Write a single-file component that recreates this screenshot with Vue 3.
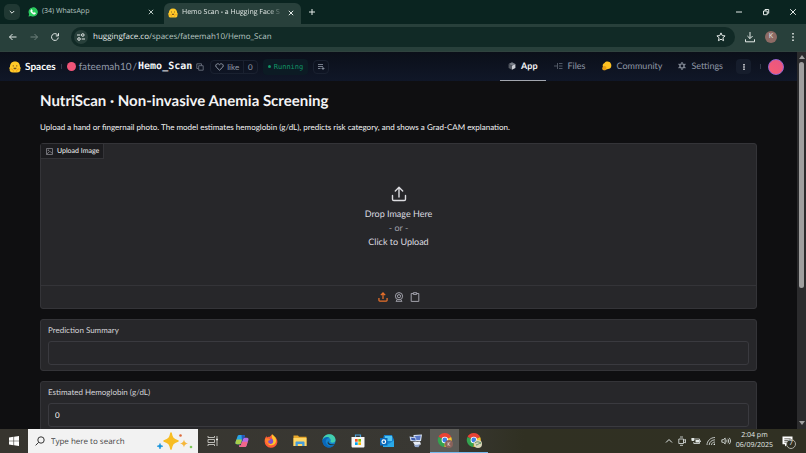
<script setup>
import { ref } from 'vue'

const search = ref('')
const summary = ref('')
const hemoglobin = ref('0')
</script>

<template>
  <div class="window">
    <header class="tabstrip">
      <button class="tab-search" aria-label="Search tabs">
        <svg width="8" height="8" viewBox="0 0 8 8"><path d="M1.8 3 4 5.2 6.2 3" class="line" /></svg>
      </button>
      <div class="tab">
        <svg width="10" height="10" viewBox="0 0 20 20">
          <path d="M1 19.2 2.3 14.300A9.200 9.200 0 1 1 5.900 17.900Z" fill="#35cf68" />
          <path d="M2.600 17.600 3.700 13.900A7.900 7.900 0 1 1 6.300 16.600Z" fill="#25c95a" />
          <path d="M6.800 5.400c.9-.5 1.300 0 1.900 1.700.2.700-.8 1.300-.7 1.600.8 1.600 2 2.600 3.500 3.200.5.100 1-1.200 1.500-1.100l2 1c.3.300 0 1.600-.8 2.100-2 1.400-5.300-.2-7.300-2.500C5 9.200 4.800 6.700 6.800 5.400Z" fill="#fff" stroke="#fff" />
        </svg>
        <span class="tab-title">(34) WhatsApp</span>
        <button aria-label="Close WhatsApp tab"><svg width="8" height="8" viewBox="0 0 8 8"><path d="m1.800 1.800 4.400 4.400m0-4.400L1.800 6.200" class="line" /></svg></button>
      </div>
      <div class="tab active">
        <svg width="10" height="10" viewBox="0 0 24 24">
          <path d="M12 1C5.500 1 2 5.500 2 11.500c-2 2-1.500 4-.5 5C.5 20 3 23 8 23h8c5 0 7.500-3 6.500-6.500 1-1 1.500-3-.5-5C22 5.500 18.500 1 12 1Z" fill="#ffc928" />
          <path d="M7.500 8.500h2v2.500h-2zm7 0h2V11h-2zM9 13.500h6c0 2-1 3-3 3s-3-1-3-3Z" fill="#7a5520" />
          <path d="M3 16c3-1 6 2 6 5M21 16c-3-1-6 2-6 5" fill="none" stroke="#f19b19" stroke-width="2" />
        </svg>
        <span class="tab-title fade">Hemo Scan - a Hugging Face S</span>
        <button aria-label="Close Hemo Scan tab"><svg width="8" height="8" viewBox="0 0 8 8"><path d="m1.800 1.800 4.400 4.400m0-4.400L1.800 6.200" class="line" /></svg></button>
      </div>
      <button class="new-tab" aria-label="New tab"><svg width="8" height="8" viewBox="0 0 8 8"><path d="M4 1v6M1 4h6" class="line" /></svg></button>
      <div class="window-controls">
        <button aria-label="Minimize"><svg width="8" height="8" viewBox="0 0 8 8"><path d="M1 4h6" class="line" /></svg></button>
        <button aria-label="Restore"><svg width="8" height="8" viewBox="0 0 8 8"><path d="M1.500 3h3.700v3.700H1.500zM3 3V1.500h3.700v3.700H5.200" class="line" /></svg></button>
        <button aria-label="Close"><svg width="8" height="8" viewBox="0 0 8 8"><path d="m1.200 1.200 5.600 5.600m0-5.600L1.200 6.800" class="line" /></svg></button>
      </div>
    </header>

    <nav class="toolbar" aria-label="Browser">
      <button aria-label="Back"><svg width="10" height="10" viewBox="0 0 10 10"><path d="M8.500 5h-7m3-3-3 3 3 3" class="line" /></svg></button>
      <button class="muted" aria-label="Forward"><svg width="10" height="10" viewBox="0 0 10 10"><path d="M1.500 5h7m-3-3 3 3-3 3" class="line" /></svg></button>
      <button aria-label="Reload"><svg width="10" height="10" viewBox="0 0 10 10"><path d="M8.300 5.500A3.400 3.400 0 1 1 7.400 2.700L8.500 3.900M8.500 1.200v2.700H5.800" class="line" /></svg></button>
      <div class="omnibox">
        <button class="site-info" aria-label="Site information"><svg width="10" height="10" viewBox="0 0 10 10"><path d="M1 3h3.300M5.700 7H9" class="line" /><circle cx="6.800" cy="3" r="1.300" class="line" /><circle cx="3" cy="7" r="1.300" class="line" /></svg></button>
        <span class="url"><b>huggingface.co</b>/spaces/fateemah10/Hemo_Scan</span>
        <button aria-label="Bookmark"><svg width="10" height="10" viewBox="0 0 10 10"><path d="m5 .9 1.200 2.700 2.900.3-2.200 1.900.7 2.900L5 7.200 2.400 8.700l.7-2.900L.9 3.900l2.900-.3Z" class="line" /></svg></button>
      </div>
      <button class="download" aria-label="Downloads"><svg width="12" height="12" viewBox="0 0 12 12"><path d="M6 1v6.500M3.400 5 6 7.600 8.600 5M1.500 8.300v2.500h9V8.300" class="line" /></svg></button>
      <button class="profile" aria-label="Profile">K</button>
      <button class="browser-menu" aria-label="Menu"><svg width="4" height="10" viewBox="0 0 4 10"><path d="M1.200 1h1.600v1.600H1.200zm0 3.200h1.600v1.600H1.200zm0 3.200h1.600V9H1.200z" fill="currentColor" /></svg></button>
    </nav>

    <div class="viewport">
      <div class="page">
        <header class="hub">
          <a class="brand" href="#spaces">
            <svg width="12" height="12" viewBox="0 0 24 24">
              <path d="M12 1C5.500 1 2 5.500 2 11.500c-2 2-1.500 4-.5 5C.5 20 3 23 8 23h8c5 0 7.500-3 6.500-6.500 1-1 1.500-3-.5-5C22 5.500 18.500 1 12 1Z" fill="#ffc928" />
              <path d="M7.500 8.500h2v2.500h-2zm7 0h2V11h-2zM9 13.500h6c0 2-1 3-3 3s-3-1-3-3Z" fill="#7a5520" />
              <path d="M3 16c3-1 6 2 6 5M21 16c-3-1-6 2-6 5" fill="none" stroke="#f19b19" stroke-width="2" />
            </svg>
            Spaces
          </a>
          <i class="sep"></i>
          <div class="repo">
            <i class="owner-dot"></i>
            <a href="#owner" class="owner">fateemah10</a><span class="slash">/</span><a href="#space" class="space">Hemo_Scan</a>
            <button class="copy" aria-label="Copy name"><svg width="8" height="8" viewBox="0 0 8 8"><path d="M2.700 2.700h4.500v4.500H2.700zM5.500 2.600V.8H.8v4.700h1.800" class="line thin" /></svg></button>
          </div>
          <button class="like">
            <span><svg width="9" height="8" viewBox="0 0 9 8"><path d="M4.500 7.200 1.200 4C-.5 1.800 2.800-.6 4.500 1.700 6.200-.6 9.500 1.800 7.800 4Z" class="line" /></svg>like</span>
            <span class="count">0</span>
          </button>
          <button class="running"><i></i>Running</button>
          <button class="logs" aria-label="Logs"><svg width="8" height="8" viewBox="0 0 8 8"><path d="M1 1.500h5M1 3.500h5M1 5.500h2.500M4.500 5.500h3M6 4v3" class="line thin" /></svg></button>

          <nav class="sections" aria-label="Space">
            <a href="#app" class="current">
              <svg width="8" height="8" viewBox="0 0 8 8"><path d="M4 .2 7.400 2 4 3.800.6 2Z" fill="#777c86" /><path d="M.6 2 4 3.800v4L.6 6Z" fill="#555a63" /><path d="M7.400 2 4 3.800v4L7.400 6Z" fill="#c9ccd3" /></svg>
              App
            </a>
            <a href="#files"><svg width="9" height="8" viewBox="0 0 9 8"><path d="M0 4h3M3.500 1v6M5 1.500h3.500M5 4h3.500M5 6.500h3.500" fill="none" stroke="#515865" stroke-width="1" /></svg>Files</a>
            <a href="#community"><svg width="10" height="10" viewBox="0 0 10 10"><path d="M2.500 2C4 0 8 0 9 3c1.200 3-1 5-3 5L2 9.300C.3 9.500 0 7 1 6c-.8-1.800 0-3.300 1.500-4Z" fill="#ffc222" /><path d="M.5 7C1 4.500 3 4.500 4.500 6L3.800 8.900C2 9.800.5 9 .5 7Z" fill="#e99c12" /></svg>Community</a>
            <a href="#settings"><svg width="8" height="8" viewBox="0 0 8 8"><circle cx="4" cy="4" r="2.100" fill="none" stroke="#838a96" stroke-width="1.400" /><path d="M4 0v1.600M4 6.400V8M.5 2l1.400.8M6.100 5.200l1.400.8M.5 6l1.400-.8M6.100 2.800 7.500 2" stroke="#838a96" stroke-width="1.300" /></svg>Settings</a>
          </nav>
          <button class="more" aria-label="More"><svg width="4" height="8" viewBox="0 0 4 8"><path d="M1.300 1h1.400v1.400H1.300zm0 2.300h1.400v1.400H1.300zm0 2.300h1.400V7H1.300z" fill="currentColor" /></svg></button>
          <i class="sep"></i>
          <button class="account" aria-label="Account"></button>
        </header>

        <main class="content">
          <h1>NutriScan · Non-invasive Anemia Screening</h1>
          <p class="intro">Upload a hand or fingernail photo. The model estimates hemoglobin (g/dL), predicts risk category, and shows a Grad-CAM explanation.</p>

          <section class="card upload">
            <div class="upload-label">
              <svg width="7" height="7" viewBox="0 0 7 7"><path d="M.5.500h6v6h-6zM.5 6.300l3.300-3 2.700 2.200" fill="none" stroke="#85858b" stroke-width=".8" /><circle cx="2.300" cy="2.300" r=".7" fill="#85858b" /></svg>
              Upload Image
            </div>
            <button class="drop">
              <svg width="16" height="16" viewBox="0 0 16 16"><path d="M8 11V1.500M4.300 5 8 1.300 11.700 5M1.500 9.500v3.700c0 .8.500 1.300 1.300 1.300h10.400c.8 0 1.300-.5 1.300-1.300V9.500" fill="none" stroke="#dcdce0" stroke-width="1.400" stroke-linecap="round" stroke-linejoin="round" /></svg>
              <span>Drop Image Here</span>
              <span class="or">- or -</span>
              <span>Click to Upload</span>
            </button>
            <div class="sources">
              <button class="selected" aria-label="Upload file"><svg width="10" height="10" viewBox="0 0 16 16"><path d="M8 11V1.800M4.500 5 8 1.500 11.500 5M1.500 9.500v3.700c0 .8.500 1.300 1.300 1.300h10.400c.8 0 1.300-.5 1.300-1.300V9.500" class="line heavy" /></svg></button>
              <button aria-label="Webcam"><svg width="10" height="10" viewBox="0 0 10 10"><circle cx="5" cy="4.200" r="3.600" class="line" /><circle cx="5" cy="4.200" r="1.600" class="line" /><path d="M3.400 7.600 2 9.300h6L6.600 7.600" class="line" /></svg></button>
              <button aria-label="Paste from clipboard"><svg width="10" height="10" viewBox="0 0 10 10"><path d="M3.300 1.500H1.200v7.900h7.600V1.500H6.700M3.300.7h3.400v1.700H3.300z" class="line" /></svg></button>
            </div>
          </section>

          <section class="card field">
            <label for="summary">Prediction Summary</label>
            <input id="summary" v-model="summary" type="text" />
          </section>
          <section class="card field">
            <label for="hemoglobin">Estimated Hemoglobin (g/dL)</label>
            <input id="hemoglobin" v-model="hemoglobin" type="text" inputmode="decimal" />
          </section>
        </main>
      </div>
      <div class="scrollbar" aria-hidden="true">
        <i class="arrow up"></i>
        <i class="thumb"></i>
        <i class="arrow down"></i>
      </div>
    </div>

    <footer class="taskbar">
      <button class="start" aria-label="Start"><svg width="10" height="10" viewBox="0 0 10 10"><path d="M0 1.400 4.500.8v3.900H0zM5.100.7 10 0v4.700H5.100zM0 5.300h4.500v3.900L0 8.600zM5.100 5.300H10V10l-4.900-.7z" fill="#fff" /></svg></button>
      <label class="search">
        <svg width="10" height="10" viewBox="0 0 10 10"><circle cx="6" cy="4" r="3.200" fill="none" stroke="#333" stroke-width="1" /><path d="M3.700 6.300.6 9.400" stroke="#333" stroke-width="1" /></svg>
        <input v-model="search" type="text" placeholder="Type here to search" aria-label="Type here to search" />
        <svg width="36" height="18" viewBox="0 0 36 18">
          <path d="M14 1c1 5 2 6.500 7 8-5 1.500-6 3-7 8-1-5-2-6.500-7-8 5-1.500 6-3 7-8Z" fill="#f7bd23" stroke="#f7bd23" stroke-width="1.500" stroke-linejoin="round" />
          <path d="M27 7.500c.7 2.800 1.200 3.200 4 4-2.800.8-3.300 1.200-4 4-.7-2.800-1.200-3.200-4-4 2.800-.8 3.300-1.200 4-4Z" fill="#f5b73c" />
          <path d="M3 11.500c.5 1.900.9 2.100 2.800 2.700-1.900.5-2.300.8-2.800 2.700-.5-1.900-.9-2.200-2.800-2.700 1.900-.6 2.300-.8 2.800-2.700Z" fill="#1593dc" stroke="#1593dc" stroke-width=".7" />
          <circle cx="23.500" cy="3.500" r="1.300" fill="#dc6939" /><circle cx="34" cy="15" r="1.300" fill="#80c95b" />
        </svg>
      </label>
      <div class="apps">
        <button aria-label="Task View"><svg width="12" height="12" viewBox="0 0 12 12"><path d="M1 1v1.500h6.500V1M1 11V9.500h6.500V11M1 4.500h6.500v3H1zM10 1v2M10 6v5" fill="none" stroke="#c9c9c4" stroke-width=".9" /><path d="M9 3.500h2v2H9z" fill="#e4e4e0" /></svg></button>
        <button aria-label="Copilot"><svg width="14" height="14" viewBox="0 0 14 14">
          <path d="M4 1h4.500c1 0 1.300.7 1.600 1.600H8.300L6 9c-.4 1-.8 1.300-1.800 1.300H2C.7 10.300.2 9.300.6 8l1.700-5C2.600 1.800 3 1 4 1Z" fill="#27a5e8" />
          <path d="M.6 8 1.500 5.500H7L6 9c-.4 1-.8 1.300-1.800 1.300H2C.7 10.300.2 9.300.6 8Z" fill="#a8ce4a" />
          <path d="M10 13H5.500c-1 0-1.300-.7-1.600-1.600h1.800L8 5c.4-1 .8-1.300 1.800-1.300H12c1.300 0 1.800 1 1.400 2.300l-1.700 5c-.3 1.200-.7 2-1.700 2Z" fill="#b66de7" />
          <path d="M10 13H5.500c-1 0-1.300-.7-1.600-1.600h1.800l1.300-3.600h5.700L11.700 11c-.3 1.200-.7 2-1.700 2Z" fill="#f0678a" />
          <path d="M6.500 1h2c1 0 1.300.7 1.800 2.700C9 3.500 8.400 4 8 5L7 7.500Z" fill="#2856b8" />
        </svg></button>
        <button aria-label="Firefox"><svg width="14" height="14" viewBox="0 0 14 14">
          <path d="M8 .3c1 1 1.600 1.700 1.700 2.500 1-.2 1 .2 1.300.2 1.800 1.600 2.600 3.300 2.300 5.500A6.400 6.400 0 0 1 .6 7.500C.6 5.500 1.200 3.500 2.500 2l.4 1.500c1-.7 1.700-.7 2.400-.6C6 2.500 7.700 1.500 8 .3Z" fill="#ff5b35" />
          <path d="M8 .3c3.500 2 4.700 5 3.900 7.700-1 2.700-3.600 3.700-6.300 3-1.600-.4-2-1.400-2.600-2 2 1 4.600.7 5.400-1C9.600 5.500 7 3 8 .3Z" fill="#ffc32e" />
          <circle cx="6.500" cy="7.200" r="2.700" fill="#8150ce" /><path d="M1 5c2-1.500 4 0 5.500.5-1 1.300-2 .6-2.300 1.700-.3 1.200.7 2 2 2.200C3.500 11 1 9 1 5Z" fill="#ff812c" />
        </svg></button>
        <button aria-label="File Explorer"><svg width="14" height="12" viewBox="0 0 14 12"><path d="M.5.500H5l1 1.300h7.500V11H.5z" fill="#e8a82b" /><path d="M.5 3h13v8H.5z" fill="#ffd766" /><path d="M2.500 11V7.500c0-.6.4-1 1-1h7c.6 0 1 .4 1 1V11H9.200V9H4.800v2z" fill="#479ddb" /></svg></button>
        <button aria-label="Edge"><svg width="14" height="14" viewBox="0 0 14 14"><circle cx="7" cy="7" r="6.500" fill="#1384cf" /><path d="M.6 6C1.500-1.500 13.500-1.600 13.500 6c0 2.500-3 3.300-4.800 2.200-.8-.6.200-1 .1-2C8.500 3 2.500 3 .6 6Z" fill="#42cfae" /><path d="M.6 6c1-3 5.200-3.700 7-2-3 0-4.500 2.500-3.600 5 1 3 4.700 4.200 8 2.200C8 16-.2 13 .6 6Z" fill="#0a67ba" /><path d="M6.300 7c-.5 2.300 2.500 4 6 3l-.8 1C8 12.300 4 10 6.300 7Z" fill="#22343d" /></svg></button>
        <button aria-label="Microsoft Store"><svg width="14" height="14" viewBox="0 0 14 14"><path d="M4.500 3V1h5v2" fill="none" stroke="#4aa4df" stroke-width="1.200" /><path d="M.5 3h13v9c0 1-.5 1.500-1.500 1.500H2C1 13.500.5 13 .5 12z" fill="#f6f6f6" /><path d="M4 5h2.700v2.700H4z" fill="#f25022" /><path d="M7.300 5H10v2.700H7.300z" fill="#7fba00" /><path d="M4 8.300h2.700V11H4z" fill="#00a4ef" /><path d="M7.300 8.300H10V11H7.300z" fill="#ffb900" /></svg></button>
        <button aria-label="Outlook"><svg width="14" height="14" viewBox="0 0 14 14"><path d="M4 1h8l2 5v7H3V5z" fill="#1682cf" /><path d="M5 2h7v5H5z" fill="#4fc5f3" /><path d="m3 7 5.500 3L14 6.500V13H3z" fill="#29a9e9" /><path d="M0 4h7.500v7.500H0z" fill="#0867b8" /><circle cx="3.800" cy="7.700" r="1.800" fill="none" stroke="#fff" stroke-width="1.200" /></svg></button>
        <button aria-label="Remote PC"><svg width="14" height="14" viewBox="0 0 14 14"><path d="M4.500 1 13 .5 12 7H5z" fill="#d9e4f4" /><path d="m5.500 2 6.300-.4L11 6H6z" fill="#5a78c8" /><path d="M.5 2.500 7 3.500l.5 4-6-.5z" fill="#c8d6f0" /><path d="m2 3.700 4.300.5.3 2.300-4-.4z" fill="#3f5cae" /><path d="m4 8 7-.5 1 3-6 1z" fill="#e7edf8" /><path d="m5 11 6-.5-1.500 2.800L6 13z" fill="#92a7ce" /></svg></button>
        <button class="focused" aria-label="Chrome, profile K"><svg width="16" height="16" viewBox="0 0 16 16"><path d="M8 7 1.500 3.900A7 7 0 0 1 14.100 4Z" fill="#e74235" /><path d="M8 7 1.500 3.900A7 7 0 0 0 7.500 14Z" fill="#34a350" /><path d="M8 7 14.100 4A7 7 0 0 1 7.500 14Z" fill="#fbc72e" /><circle cx="7.800" cy="7" r="3.200" fill="#fff" /><circle cx="7.800" cy="7" r="2.400" fill="#3c7fe5" /><circle cx="12" cy="11" r="4" fill="#8a625b" /><path d="M11 9.200v3.600M13.300 9.200 11 11.100l2.300 1.700" fill="none" stroke="#ead8d4" stroke-width=".7" /></svg></button>
        <button class="open" aria-label="Chrome"><svg width="16" height="16" viewBox="0 0 16 16"><path d="M8 7 1.500 3.900A7 7 0 0 1 14.100 4Z" fill="#e74235" /><path d="M8 7 1.500 3.900A7 7 0 0 0 7.500 14Z" fill="#34a350" /><path d="M8 7 14.100 4A7 7 0 0 1 7.500 14Z" fill="#fbc72e" /><circle cx="7.800" cy="7" r="3.200" fill="#fff" /><circle cx="7.800" cy="7" r="2.400" fill="#3c7fe5" /><circle cx="12" cy="11" r="4" fill="#d9d5b8" /><path d="M9 10c2-2 4-1 6 0-2 0-3 2-5 2" fill="none" stroke="#5c9062" /></svg></button>
      </div>
      <div class="tray">
        <button aria-label="Hidden icons"><svg width="8" height="8" viewBox="0 0 8 8"><path d="M1 5.500 4 2.500l3 3" class="line" /></svg></button>
        <button aria-label="Meet now"><svg width="8" height="10" viewBox="0 0 8 10"><path d="M2 1h3M.8 3h4.700v4.500H.8zM5.500 4.300l2-.8v3.300l-2-.8M2 9.300h3" class="line thin" /></svg></button>
        <button aria-label="Battery"><svg width="10" height="8" viewBox="0 0 10 8"><path d="M3.500 2h5v4.500H2.800V5M9.500 3.500v1.500" class="line thin" /><path d="M.4 1h3v2.300c0 1-3 1-3 0zM4.500 3H8v2.500H4.500z" fill="currentColor" /></svg></button>
        <button aria-label="Network"><svg width="10" height="10" viewBox="0 0 10 10"><path d="M1 9c0-4 3.500-7.500 8-7.500M3.200 9c0-3 2.800-5.200 5.800-5.200M5.500 9c0-2 1.700-3 3.500-3" class="line thin" /><path d="M7.500 9c0-1 .7-1.400 1.500-1.400V9z" fill="currentColor" /></svg></button>
        <button aria-label="Volume"><svg width="10" height="10" viewBox="0 0 12 10"><path d="M1 3.500h1.700L5 1.500v7L2.700 6.500H1zM6.500 3.500c.8 1 .8 2 0 3M8.200 2.300c1.300 1.700 1.300 3.700 0 5.400M9.900 1.200c2 2.500 2 5.100 0 7.600" class="line" /></svg></button>
      </div>
      <time class="clock" datetime="2025-09-06T14:04"><span>2:04 pm</span><span>06/09/2025</span></time>
      <button class="notifications" aria-label="7 notifications">
        <svg width="11" height="11" viewBox="0 0 11 11"><path d="M.5.500h10v7.800H5.300L3 10.500V8.300H.5z" fill="#fff" /><path d="M2.300 2.800h6.400M2.300 4.500h6.400M2.300 6.200h4" stroke="#35352c" stroke-width=".7" /></svg>
        <span class="badge">7</span>
      </button>
    </footer>
  </div>
</template>

<style>
body {
  margin: 0;
  background: #0f0f11;
}
</style>

<style scoped>
* {
  box-sizing: border-box;
}
.window {
  display: flex;
  flex-direction: column;
  height: 100vh;
  overflow: hidden;
  font-family: "Open Sans", "Noto Sans", sans-serif;
  text-rendering: geometricPrecision;
  color: #e3e9e7;
}
button,
input {
  text-rendering: inherit;
}
button {
  display: flex;
  align-items: center;
  justify-content: center;
  padding: 0;
  border: 0;
  background: none;
  color: inherit;
  font: inherit;
  flex: none;
}
a {
  color: inherit;
  text-decoration: none;
}
svg {
  display: block;
  flex: none;
}
.line {
  fill: none;
  stroke: currentColor;
  stroke-width: 1;
}
.thin {
  stroke-width: 0.8;
}
.heavy {
  stroke-width: 2;
}

/* Browser chrome */
.tabstrip {
  display: flex;
  align-items: center;
  flex: none;
  height: 24px;
  padding-left: 4px;
  background: #0a2420;
  font-size: 7px;
  line-height: 12px;
}
.tab-search {
  width: 16px;
  height: 16px;
  border-radius: 5px;
  background: #203833;
}
.tab {
  display: flex;
  align-items: center;
  gap: 4px;
  width: 144px;
  height: 20px;
  padding: 0 9px 0 8px;
  color: #b9c7c3;
}
.tab.active {
  width: 137px;
  height: 21px;
  padding: 0 6px 2px 4px;
  align-self: flex-end;
  border-radius: 6px 6px 0 0;
  background: #28403b;
  color: #e3e9e7;
}
.tab-title {
  flex: 1;
  white-space: nowrap;
}
.fade {
  mask-image: linear-gradient(90deg, #000 85%, transparent);
}
.new-tab {
  width: 22px;
}
.window-controls {
  display: flex;
  margin-left: auto;
}
.window-controls button {
  width: 27px;
  height: 24px;
}
.toolbar {
  display: flex;
  align-items: center;
  flex: none;
  height: 28px;
  padding: 0 11px 2px 8px;
  gap: 11px;
  border-bottom: 1px solid #30433f;
  background: #28403b;
}
.toolbar .muted {
  color: #70827e;
}
.omnibox {
  display: flex;
  align-items: center;
  flex: 1;
  height: 20px;
  padding: 0 9px 0 3px;
  border-radius: 10px;
  background: #112a26;
}
.site-info {
  width: 14px;
  height: 14px;
  border-radius: 50%;
  background: #28403b;
}
.url {
  flex: 1;
  padding-left: 5px;
  font-size: 8px;
  color: #b9c7c3;
}
.url b {
  font-weight: 400;
  color: #e3e9e7;
}
.download {
  margin-left: -2px;
}
.profile {
  width: 12px;
  height: 12px;
  border-radius: 50%;
  background: #8e6b65;
  font-size: 7px;
  margin-left: -2px;
}
.browser-menu {
  margin-left: 3px;
}

/* Page */
.viewport {
  display: flex;
  flex: 1;
  min-height: 0;
  background: #0f0f11;
  font-family: Lato, sans-serif;
}
.page {
  flex: 1;
  min-width: 0;
  overflow: hidden;
}
.hub {
  display: flex;
  align-items: center;
  height: 29px;
  padding: 0 13px 0 9px;
  background: linear-gradient(#0b0f19, #101728);
  color: #9098a6;
  font-size: 9px;
  line-height: 14px;
}
.brand {
  display: flex;
  align-items: center;
  gap: 4px;
  color: #fff;
  font-size: 10px;
  font-weight: 700;
}
.sep {
  width: 1px;
  height: 5px;
  margin: 0 5px;
  background: #343b4b;
}
.repo {
  display: flex;
  align-items: center;
}
.owner-dot {
  width: 9px;
  height: 9px;
  margin-right: 3px;
  border-radius: 50%;
  background: #ef5478;
}
.owner,
.slash {
  font-size: 10px;
}
.slash {
  padding: 0 1px;
}
.space {
  color: #f3f4f6;
  font-family: "DejaVu Sans Mono", monospace;
  font-size: 10px;
  font-weight: 700;
}
.copy {
  margin-left: 4px;
  color: #737a88;
}
.like,
.running,
.logs {
  height: 14px;
  border: 1px solid #1a2130;
  border-radius: 4px;
}
.like {
  margin-left: 6px;
  font-size: 8px;
}
.like span {
  display: flex;
  align-items: center;
  gap: 3px;
  padding: 0 4px;
}
.like .count {
  border-left: 1px solid #1a2130;
}
.running {
  gap: 3px;
  height: 16px;
  margin: 0 5px;
  padding: 0 5px;
  border: 0;
  background: #0c1b24;
  color: #119466;
  font-family: "DejaVu Sans Mono", monospace;
  font-size: 7px;
}
.running i {
  width: 3px;
  height: 3px;
  border-radius: 50%;
  background: #119466;
}
.logs {
  width: 16px;
}
.sections {
  display: flex;
  align-self: stretch;
  margin-left: auto;
}
.sections a {
  display: flex;
  align-items: center;
  gap: 5px;
  padding: 0 8px;
  border-bottom: 1px solid transparent;
}
.sections .current {
  border-color: #a2a6ae;
  color: #f3f4f6;
  font-weight: 700;
}
.more {
  width: 15px;
  height: 15px;
  margin: 0 4px 0 5px;
  border-radius: 4px;
  background: #161d2c;
  color: #f3f4f6;
}
.account {
  width: 16px;
  height: 16px;
  margin-left: 2px;
  border: 1px solid #9665cf;
  border-radius: 50%;
  background: linear-gradient(45deg, #f75c72, #e65685);
}
.content {
  display: flex;
  flex-direction: column;
  padding: 10px 40px;
  color: #f4f4f5;
  font-size: 8px;
  line-height: 12px;
}
h1 {
  margin: 0;
  font-size: 15px;
  line-height: 20px;
}
.intro {
  margin: 10px 0;
}
.card {
  margin-bottom: 10px;
  border: 1px solid #343438;
  border-radius: 3px;
  background: #27272a;
}
.upload {
  display: flex;
  flex-direction: column;
  height: 166px;
}
.upload-label {
  display: flex;
  align-items: center;
  align-self: flex-start;
  gap: 4px;
  height: 15px;
  padding: 0 4px 0 5px;
  border: solid #343438;
  border-width: 0 1px 1px 0;
  background: #1c1c1f;
  font-size: 7px;
}
.drop {
  flex: 1;
  flex-direction: column;
  padding-bottom: 10px;
  color: #dcdce0;
  font-size: 9px;
  line-height: 14px;
}
.drop svg {
  margin-bottom: 5px;
}
.drop .or {
  color: #a1a1aa;
}
.sources {
  display: flex;
  align-items: center;
  justify-content: center;
  gap: 6px;
  height: 23px;
  border-top: 1px solid #343438;
  color: #a1a1aa;
}
.sources .selected {
  color: #e8702a;
}
.field {
  display: flex;
  flex-direction: column;
  gap: 5px;
  padding: 4px 7px 5px;
  color: #d4d4d8;
}
.field input {
  width: 100%;
  height: 24px;
  padding: 0 6px;
  border: 1px solid #3a3a3f;
  border-radius: 3px;
  background: #27272a;
  color: #f4f4f5;
  font: inherit;
}
.scrollbar {
  display: flex;
  flex-direction: column;
  align-items: center;
  flex: none;
  width: 9px;
  padding: 3px 0 4px;
  background: #2b2b2d;
}
.arrow {
  border: 3px solid transparent;
}
.up {
  border-top-width: 0;
  border-bottom: 4px solid #a0a0a0;
}
.down {
  margin-top: auto;
  border-bottom-width: 0;
  border-top: 4px solid #a0a0a0;
}
.thumb {
  width: 5px;
  height: 61%;
  margin-top: 3px;
  border-radius: 3px;
  background: #9f9f9f;
}

/* Taskbar */
.taskbar {
  display: flex;
  align-items: center;
  flex: none;
  height: 24px;
  background: linear-gradient(90deg, #37352f, #393833 55%, #303022 65%, #303023);
}
.start {
  width: 28px;
  height: 24px;
}
.search {
  display: flex;
  align-items: center;
  gap: 6px;
  width: 170px;
  height: 24px;
  padding: 0 5px 0 7px;
  background: #f2f2f2;
}
.search input {
  flex: 1;
  min-width: 0;
  padding: 0;
  border: 0;
  background: none;
  color: #333;
  font: 8px "Open Sans", sans-serif;
}
.search input::placeholder {
  color: #444;
  opacity: 1;
}
.apps {
  display: flex;
}
.apps button {
  width: 29px;
  height: 24px;
  border-bottom: 1px solid transparent;
}
.apps .focused,
.apps .open {
  border-color: #76b9ed;
}
.apps .focused {
  background: #5d5c57;
}
.tray {
  display: flex;
  gap: 5px;
  margin-left: auto;
}
.clock {
  display: flex;
  flex-direction: column;
  align-items: center;
  margin: 0 9px 0 5px;
  font-size: 7px;
  line-height: 10px;
}
.notifications {
  position: relative;
  margin-right: 13px;
}
.badge {
  position: absolute;
  left: 4px;
  top: 3px;
  width: 10px;
  height: 10px;
  border: 1px solid #b0b0a8;
  border-radius: 50%;
  background: #303023;
  font-size: 7px;
  line-height: 8px;
  text-align: center;
}
</style>
